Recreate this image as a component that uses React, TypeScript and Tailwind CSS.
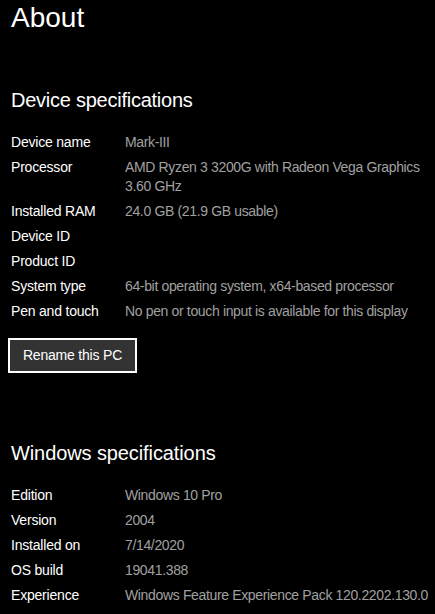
import React from "react";

type Spec = { label: string; value?: string[] };

/* ========================= DATA ========================= */
const deviceSpecs: Spec[] = [
  { label: "Device name", value: ["Mark-III"] },
  {
    label: "Processor",
    value: ["AMD Ryzen 3 3200G with Radeon Vega Graphics", "3.60 GHz"],
  },
  { label: "Installed RAM", value: ["24.0 GB (21.9 GB usable)"] },
  { label: "Device ID" },
  { label: "Product ID" },
  { label: "System type", value: ["64-bit operating system, x64-based processor"] },
  { label: "Pen and touch", value: ["No pen or touch input is available for this display"] },
];

const windowsSpecs: Spec[] = [
  { label: "Edition", value: ["Windows 10 Pro"] },
  { label: "Version", value: ["2004"] },
  { label: "Installed on", value: ["7/14/2020"] },
  { label: "OS build", value: ["19041.388"] },
  { label: "Experience", value: ["Windows Feature Experience Pack 120.2202.130.0"] },
];

const SpecList: React.FC<{ items: Spec[] }> = ({ items }) => (
  <div className="mt-[19px] flex flex-col gap-[6px]">
    {items.map((s) => (
      <div key={s.label} className="flex text-[14px] leading-[19px]">
        <div className="w-[114px] shrink-0 text-white tracking-[-0.2px]">{s.label}</div>
        <div className="text-[#a0a0a0] whitespace-nowrap tracking-[-0.35px]">
          {(s.value || [""]).map((line, i) => (
            <div key={i} className="min-h-[19px]">
              {line}
            </div>
          ))}
        </div>
      </div>
    ))}
  </div>
);

const App: React.FC = () => {
  return (
    <div className="min-h-screen w-full overflow-hidden bg-black pl-[11px] text-white font-['Liberation_Sans',Arial,sans-serif]">
      <h1 className="text-[28px] leading-[36px] font-normal">About</h1>

      {/* ========================= DEVICE ========================= */}
      <h2 className="mt-[50px] text-[20px] leading-[28px] font-normal tracking-[-0.25px]">
        Device specifications
      </h2>
      <SpecList items={deviceSpecs} />

      <button className="mt-[17px] -ml-[3px] flex h-[35px] w-[129px] items-center justify-center border-2 border-white bg-[#333333] text-[14px] tracking-[-0.2px] text-white">
        Rename this PC
      </button>

      {/* ========================= WINDOWS ========================= */}
      <h2 className="mt-[66px] text-[20px] leading-[28px] font-normal tracking-[-0.1px]">
        Windows specifications
      </h2>
      <SpecList items={windowsSpecs} />
    </div>
  );
};

export default App;
